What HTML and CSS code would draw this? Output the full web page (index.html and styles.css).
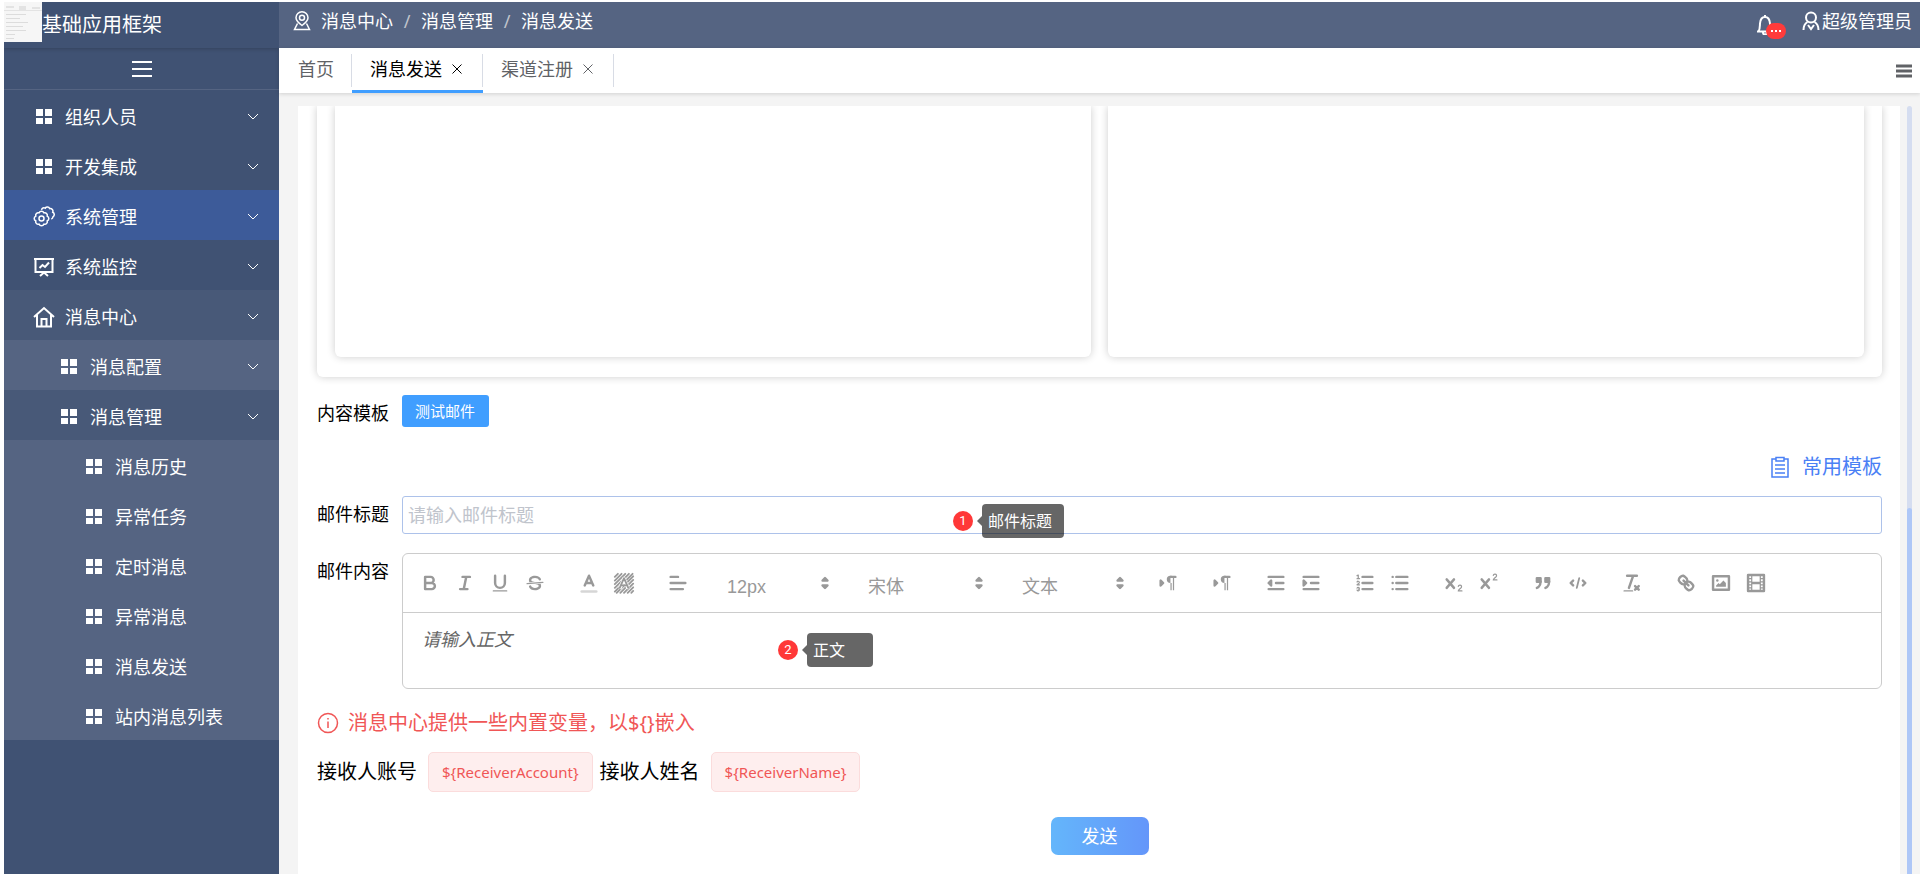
FILE: index.html
```html
<!DOCTYPE html>
<html lang="zh-CN">
<head>
<meta charset="utf-8">
<title>消息发送</title>
<link rel="stylesheet" href="styles.css">
</head>
<body>
<svg class="sprite" aria-hidden="true">
  <symbol id="grid" viewBox="0 0 16 16"><path fill="currentColor" d="M0 0h7v7H0zM9 0h7v7H9zM0 9h7v6H0zM9 9h7v6H9z"/></symbol>
  <symbol id="chevron" viewBox="0 0 12 8"><path d="M1 1l5 5 5-5"/></symbol>
  <symbol id="close" viewBox="0 0 10 10"><path d="M.5 .5l9 9M9.500 .5l-9 9"/></symbol>
  <symbol id="arrows" viewBox="0 0 18 18"><path fill="currentColor" d="M7 11l2 2 2-2zM7 7l2-2 2 2z"/></symbol>
  <symbol id="ltr" viewBox="0 0 18 18"><path fill="currentColor" d="M3 11l2-2-2-2z"/><path d="M15 4h-4"/><path fill="currentColor" stroke="none" d="M11 3a3 3 0 0 0 0 6h1V3zM11 4h1v11h-1zM13 4h1v11h-1z"/></symbol>
</svg>
<div class="app">
  <aside class="sidebar">
    <div class="brand">
      <svg class="brand-logo" viewBox="0 0 38 40" aria-hidden="true"><path fill="#f6f6f6" stroke="none" d="M0 0h38v40H0z"/><path fill="#e3e3e3" stroke="none" d="M2 4h8v2H2zM15 4h7v4h-7zM28 5h8v2h-8zM0 8h38v1H0z"/><path stroke="#dcdcdc" d="M2 12.500h20M2 16.500h14M2 20.500h22M2 24.500h17M2 28.500h20M2 32.500h9M2 36.500h8"/></svg>
      <span>基础应用框架</span>
    </div>
    <button class="collapse" aria-label="折叠菜单"><svg viewBox="0 0 20 18" width="20" height="18"><path d="M0 2h20M0 9h20M0 16h20"/></svg></button>
    <nav class="menu">
      <button class="item"><svg class="ico small"><use href="#grid"/></svg><span>组织人员</span><svg class="arrow"><use href="#chevron"/></svg></button>
      <button class="item"><svg class="ico small"><use href="#grid"/></svg><span>开发集成</span><svg class="arrow"><use href="#chevron"/></svg></button>
      <button class="item active"><svg class="ico" viewBox="0 0 22 22"><path d="M14.200 14.900A2.600 2.600 0 0 1 10.900 18.200 2.600 2.600 0 0 1 6.100 18.200 2.600 2.600 0 0 1 2.800 14.900 2.600 2.600 0 0 1 2.800 10.100 2.600 2.600 0 0 1 6.100 6.800 2.600 2.600 0 0 1 10.900 6.800 2.600 2.600 0 0 1 14.200 10.100 2.600 2.600 0 0 1 14.200 14.900z"/><circle cx="8.500" cy="12.500" r="2.500"/><path d="M8.500 3.800A2.500 2.500 0 0 1 12.200 2.200 2.600 2.600 0 0 1 16.700 2.600 2.600 2.600 0 0 1 19.700 6.200 2.600 2.600 0 0 1 20 10.800 2.500 2.500 0 0 1 18.300 13"/></svg><span>系统管理</span><svg class="arrow"><use href="#chevron"/></svg></button>
      <button class="item"><svg class="ico" viewBox="0 0 22 22"><path d="M1 3h20M2.500 3v13h17V3M6.500 12l3-3 2.500 2 4-4.500M7 20l4-3.500 4 3.500"/></svg><span>系统监控</span><svg class="arrow"><use href="#chevron"/></svg></button>
      <button class="item open"><svg class="ico" viewBox="0 0 22 22"><path d="M1 11L11 2l10 9M4 9v11.500h14V9M8.500 20v-7h5v7"/></svg><span>消息中心</span><svg class="arrow"><use href="#chevron"/></svg></button>
      <button class="item level2"><svg class="ico small"><use href="#grid"/></svg><span>消息配置</span><svg class="arrow"><use href="#chevron"/></svg></button>
      <button class="item level2 open"><svg class="ico small"><use href="#grid"/></svg><span>消息管理</span><svg class="arrow"><use href="#chevron"/></svg></button>
      <a class="item level3" href="#"><svg class="ico small"><use href="#grid"/></svg><span>消息历史</span></a>
      <a class="item level3" href="#"><svg class="ico small"><use href="#grid"/></svg><span>异常任务</span></a>
      <a class="item level3" href="#"><svg class="ico small"><use href="#grid"/></svg><span>定时消息</span></a>
      <a class="item level3" href="#"><svg class="ico small"><use href="#grid"/></svg><span>异常消息</span></a>
      <a class="item level3" href="#"><svg class="ico small"><use href="#grid"/></svg><span>消息发送</span></a>
      <a class="item level3" href="#"><svg class="ico small"><use href="#grid"/></svg><span>站内消息列表</span></a>
    </nav>
  </aside>

  <div class="main">
    <header class="topbar">
      <nav class="crumbs" aria-label="面包屑">
        <svg class="pin" viewBox="0 0 18 20"><path d="M9 14.500C5.500 12 3 9.500 3 6.800a6 6 0 0 1 12 0c0 2.700-2.500 5.200-6 7.700z"/><circle cx="9" cy="6.800" r="2.500"/><path d="M4.500 12.500L1.500 18.500h15l-3-6"/></svg>
        <a href="#">消息中心</a><i>/</i><a href="#">消息管理</a><i>/</i><a href="#">消息发送</a>
      </nav>
      <div class="account">
        <button class="bell" aria-label="通知"><svg viewBox="0 0 18 21" width="18" height="21"><path d="M1 17.500h16M2.500 17.500c1.500-2 1.300-5 1.500-8 .3-4 2-6.500 5-6.500s4.700 2.500 5 6.500c.2 3 0 6 1.500 8M9 1v2M7 18.500a2 2 0 0 0 4 0"/></svg><span class="badge"><b></b><b></b><b></b></span></button>
        <button class="user"><svg viewBox="0 0 18 20" width="18" height="20"><circle cx="9" cy="6.500" r="5"/><path d="M1.500 19c0-3.500 1.500-6.500 4-8M16.500 19c0-3.500-1.500-6.500-4-8M6 14l3 4 3-4"/></svg><span>超级管理员</span></button>
      </div>
    </header>

    <div class="tabs">
      <button class="tab home">首页</button>
      <div class="tab current"><span>消息发送</span><button class="x" aria-label="关闭消息发送"><svg width="10" height="10"><use href="#close"/></svg></button></div>
      <div class="tab"><span>渠道注册</span><button class="x" aria-label="关闭渠道注册"><svg width="10" height="10"><use href="#close"/></svg></button></div>
      <button class="tabs-menu" aria-label="标签菜单"><svg viewBox="0 0 16 14" width="16" height="14"><path d="M0 2h16M0 7h16M0 12h16"/></svg></button>
    </div>

    <div class="content">
      <main class="card">
        <section class="receivers"><div class="pane"></div><div class="pane"></div></section>
        <form class="form">
          <div class="row template">
            <span class="label">内容模板</span>
            <button type="button" class="primary">测试邮件</button>
          </div>
          <a class="common" href="#"><svg viewBox="0 0 20 22" width="20" height="22"><path d="M6 3H2v18h16V3h-4M6 1.500h8V5H6zM5 9h10M5 13h10M5 17h10"/></svg><span>常用模板</span></a>
          <div class="row title">
            <label class="label" for="title">邮件标题</label>
            <div class="field">
              <input id="title" type="text" placeholder="请输入邮件标题">
              <div class="hint hint-title"><span class="num">1</span><span class="tip">邮件标题</span></div>
            </div>
          </div>
          <div class="row body">
            <label class="label" for="body">邮件内容</label>
            <div class="field editor">
              <div class="toolbar">
                <div class="group">
                  <button type="button" aria-label="粗体"><svg viewBox="0 0 18 18"><path d="M5 4h4.500a2.500 2.500 0 0 1 0 5H5zM5 9h5.500a2.500 2.500 0 0 1 0 5H5z"/></svg></button>
                  <button type="button" aria-label="斜体"><svg viewBox="0 0 18 18"><path d="M7 4h6M5 14h6M8 14l2-10"/></svg></button>
                  <button type="button" aria-label="下划线"><svg viewBox="0 0 18 18"><path d="M5 3v6a4 4 0 0 0 8 0V3"/><rect class="f" x="3" y="15" width="12" height="1" rx=".5"/></svg></button>
                  <button type="button" aria-label="删除线"><svg viewBox="0 0 18 18"><path class="t" d="M15.500 8.500l-13 1"/><path class="f" d="M9 8C6.500 7.800 6 7.500 6 6.500 6 5.800 7.300 5 9 5c1.600 0 2.800.7 3 1.300a1 1 0 0 0 1.900-.6C13.400 4.100 11.400 3 9 3 6.200 3 4 4.500 4 6.500a3.200 3.200 0 0 0 .5 1.800zM9 10c2.500.2 3 .5 3 1.500 0 .7-1.300 1.500-3 1.500-1.600 0-2.800-.7-3-1.300a1 1 0 1 0-1.900.6C4.600 13.900 6.600 15 9 15c2.800 0 5-1.500 5-3.500a3.200 3.200 0 0 0-.5-1.800z"/></svg></button>
                </div>
                <div class="group">
                  <button type="button" aria-label="文字颜色"><svg viewBox="0 0 18 18"><path opacity=".4" d="M3 16h12"/><path d="M5.500 11L9 3l3.500 8M11.600 9H6.400"/></svg></button>
                  <button type="button" aria-label="背景颜色"><svg viewBox="0 0 18 18"><path class="h" d="M1.500 4l2.500-2.500M1.500 7L7 1.500M1.500 10L10 1.500M1.500 13L13 1.500M1.500 16L16 1.500M3 17L16.500 3.500M6 17L16.500 6.500M9 17l7.500-7.500M12 17l4.500-4.500M15 17l1.500-1.500"/><path stroke="#fff" stroke-width="3" d="M6 12.500l3-7 3 7"/><path stroke-width="1.500" d="M5.500 13L9 5l3.500 8M11.600 11H6.400"/></svg></button>
                </div>
                <div class="group"><button type="button" aria-label="对齐"><svg viewBox="0 0 18 18"><path d="M3 4h6M3 9h12M3 14h10"/></svg></button></div>
                <div class="picker"><select aria-label="字号"><option>12px</option></select><svg><use href="#arrows"/></svg></div>
                <div class="picker wide"><select aria-label="字体"><option>宋体</option></select><svg><use href="#arrows"/></svg></div>
                <div class="picker"><select aria-label="段落"><option>文本</option></select><svg><use href="#arrows"/></svg></div>
                <div class="group"><button type="button" aria-label="从左到右"><svg><use href="#ltr"/></svg></button></div>
                <div class="group"><button type="button" aria-label="文字方向"><svg><use href="#ltr"/></svg></button></div>
                <div class="group">
                  <button type="button" aria-label="减少缩进"><svg viewBox="0 0 18 18"><path d="M3 4h12M3 14h12M9 9h6"/><path class="fs" d="M5 7v4L3 9z"/></svg></button>
                  <button type="button" aria-label="增加缩进"><svg viewBox="0 0 18 18"><path d="M3 4h12M3 14h12M9 9h6"/><path class="fs" d="M3 7v4l2-2z"/></svg></button>
                </div>
                <div class="group">
                  <button type="button" aria-label="有序列表"><svg viewBox="0 0 18 18"><path d="M7 4h8M7 9h8M7 14h8"/><path class="t" d="M2.500 3l1-.5v3M2.500 5.500h2M4.500 10.500h-2c0-.3 1.900-1.100 1.900-2.200a1 1 0 0 0-1.900-.1M2.500 14.800a1 1 0 0 0 1.900-.1c0-.4-.3-.7-.7-.7.4 0 .7-.3.700-.7a1 1 0 0 0-1.900-.1"/></svg></button>
                  <button type="button" aria-label="无序列表"><svg viewBox="0 0 18 18"><path d="M6 4h9M6 9h9M6 14h9M3 4h0M3 9h0M3 14h0"/></svg></button>
                </div>
                <div class="group">
                  <button type="button" aria-label="下标"><svg viewBox="0 0 18 18"><path d="M3 6l6 7M9 6l-6 7"/><path class="t" d="M12.500 11.800c.3-1.400 2.700-1.300 2.700.2 0 1.400-2.700 2-2.700 3.500h3"/></svg></button>
                  <button type="button" aria-label="上标"><svg viewBox="0 0 18 18"><path d="M3 6l6 7M9 6l-6 7"/><path class="t" d="M12.500 2.800c.3-1.400 2.700-1.300 2.700.2 0 1.400-2.700 2-2.700 3.500h3"/></svg></button>
                </div>
                <div class="group">
                  <button type="button" aria-label="引用"><svg viewBox="0 0 18 18"><path class="fs" d="M4 5h3v3H4zM11 5h3v3h-3z"/><path d="M7 8c0 4-3 5-3 5M14 8c0 4-3 5-3 5"/></svg></button>
                  <button type="button" aria-label="代码"><svg viewBox="0 0 18 18"><path d="M5 7L3 9l2 2M13 7l2 2-2 2"/><path stroke-width="1.500" d="M10 5L8 13"/></svg></button>
                </div>
                <div class="group"><button type="button" aria-label="清除格式"><svg viewBox="0 0 18 18"><path d="M5 3h8M6.500 13L10 3M11.500 11.500l3 3M14.500 11.500l-3 3"/><rect class="f" x="2" y="15" width="8" height="1" rx=".5"/></svg></button></div>
                <div class="group">
                  <button type="button" aria-label="链接"><svg viewBox="0 0 18 18"><path d="M7 7l4 4M8.900 4.600a3.500 3.500 0 0 1 .4 4.700 3.500 3.500 0 0 1-4.700-.4C3.200 7.500 2 6.400 4.200 4.200s3.300-1 4.700.4zM13.400 9.100a3.500 3.500 0 0 0-4.700-.4 3.500 3.500 0 0 0 .4 4.700c1.400 1.400 2.500 2.500 4.700.4s1-3.300-.4-4.700z"/></svg></button>
                  <button type="button" aria-label="图片"><svg viewBox="0 0 18 18"><path d="M2.500 3.500h13v11h-13z"/><circle class="f" cx="6" cy="7" r="1"/><path class="f" d="M5 12v-1l2-2 1 1 3-3 2 2v3z"/></svg></button>
                  <button type="button" aria-label="视频"><svg viewBox="0 0 18 18"><path d="M2.500 2.500h13v13h-13z"/><path class="f" d="M5 3h1v12H5zM12 3h1v12h-1zM6 8h6v2H6zM3 5h3v1H3zM3 7.500h3v1H3zM3 10h3v1H3zM3 12.500h3v1H3zM12 5h3v1h-3zM12 7.500h3v1h-3zM12 10h3v1h-3zM12 12.500h3v1h-3z"/></svg></button>
                </div>
              </div>
              <textarea id="body" placeholder="请输入正文"></textarea>
              <div class="hint hint-body"><span class="num">2</span><span class="tip">正文</span></div>
            </div>
          </div>
          <p class="notice"><svg viewBox="0 0 22 22" width="22" height="22"><circle cx="11" cy="11" r="9.500"/><path d="M11 6v1.500M11 9.500V16"/></svg><span>消息中心提供一些内置变量，以${}嵌入</span></p>
          <div class="vars"><span>接收人账号</span><code>${ReceiverAccount}</code><span>接收人姓名</span><code>${ReceiverName}</code></div>
          <button type="submit" class="send">发送</button>
        </form>
      </main>
      <div class="scroll"><div class="thumb"></div></div>
    </div>
  </div>
</div>
</body>
</html>
```
FILE: styles.css
```css
* { box-sizing: border-box; }
body {
  margin: 0;
  background: #fff;
  color: #000;
  font: 400 18px/24px "Noto Sans", "Noto Sans CJK SC", sans-serif;
}
button, input, select, textarea { font: inherit; color: inherit; margin: 0; }
button { padding: 0; border: 0; background: none; cursor: pointer; }
a { color: inherit; text-decoration: none; }
svg { fill: none; stroke: currentColor; flex: none; }
.sprite { position: absolute; width: 0; height: 0; }

.app { display: flex; height: 100vh; padding: 2px 0 7px 4px; }

/* Sidebar */
.sidebar { width: 275px; flex: none; background: #405273; color: #fff; overflow: hidden; }
.brand { display: flex; align-items: flex-start; height: 46px; font-size: 20px; line-height: 45px; box-shadow: 0 1px 4px rgba(0, 0, 0, .2); }
.brand-logo { width: 38px; height: 40px; }
.collapse { display: flex; align-items: center; justify-content: center; width: 100%; height: 42px; border-bottom: 1px solid #556482; }
.collapse svg { stroke-width: 2; }
.item { display: flex; align-items: center; width: 100%; height: 50px; padding: 4px 20px 0 29px; text-align: left; }
.item span { flex: 1; }
.ico { width: 22px; height: 22px; margin-right: 10px; stroke-width: 2; }
.active .ico { stroke-width: 1.500; }
.ico.small { width: 16px; height: 16px; margin: 0 13px 0 3px; stroke: none; }
.arrow { width: 12px; height: 8px; stroke-width: 1; }
.item.active { background: #3d5b99; }
.level2, .level3 { background: #556482; }
.item.open { background: #485978; }
.level2 { padding-left: 54px; }
.level3 { padding-left: 79px; }

/* Header */
.main { flex: 1; min-width: 0; display: flex; flex-direction: column; }
.topbar { display: flex; justify-content: space-between; height: 46px; flex: none; padding: 0 8px 0 14px; background: #556482; color: #fff; }
.crumbs { display: flex; align-items: center; height: 38px; }
.pin { width: 18px; height: 20px; margin-right: 10px; stroke-width: 1.500; }
.crumbs i { width: 28px; text-align: center; font-style: normal; color: #c0c4cc; }
.account { display: flex; align-items: flex-start; gap: 16px; height: 46px; }
.bell { position: relative; width: 30px; height: 21px; margin-top: 12px; text-align: left; }
.bell svg, .user svg { display: block; stroke-width: 2; }
.badge { position: absolute; left: 10px; top: 9px; display: flex; align-items: center; justify-content: center; gap: 2px; width: 20px; height: 16px; border-radius: 8px; background: #ff3b3b; }
.badge b { width: 2px; height: 2px; background: #fff; }
.user { display: flex; align-items: center; gap: 2px; height: 38px; }

.tabs { display: flex; height: 45px; flex: none; position: relative; background: #fff; color: #606266; box-shadow: 0 1px 4px rgba(0, 0, 0, .15); }
.tab { position: relative; display: flex; align-items: center; gap: 10px; height: 41px; padding: 0 21px 0 18px; }
.tab.home { padding: 0 18px 0 19px; }
.tab::after { content: ""; position: absolute; right: 0; top: 6px; width: 1px; height: 33px; background: #d8dce5; }
.tab.current { height: 45px; color: #000; border-bottom: 3px solid #409eff; padding-bottom: 1px; }
.x { width: 10px; height: 24px; display: flex; align-items: center; }
.tabs-menu { margin: 0 8px 0 auto; color: #606266; }
.tabs-menu svg { stroke-width: 3; display: block; }

/* Content */
.content { flex: 1; min-height: 0; display: flex; padding: 13px 8px 0 19px; background: #f4f4f4; }
.card { flex: 1; min-width: 0; padding: 0 18px 0 19px; background: #fff; overflow: hidden; }
.scroll { width: 5px; margin-left: 7px; display: flex; flex-direction: column; justify-content: flex-end; border-radius: 3px 3px 0 0; background: #d5ddf0; }
.thumb { height: 47.600%; border-radius: 3px 3px 0 0; background: #aec7f7; }
.receivers { display: flex; gap: 17px; height: 271px; padding: 0 18px 20px; border-radius: 0 0 6px 6px; box-shadow: 0 0 8px rgba(0, 0, 0, .2); }
.pane { flex: 1; border-radius: 0 0 6px 6px; box-shadow: 0 0 8px rgba(0, 0, 0, .2); }

.form { display: flex; flex-direction: column; }
.row { display: flex; align-items: flex-start; }
.label { width: 85px; flex: none; line-height: 36px; }
.field { position: relative; flex: 1; min-width: 0; }
.template { margin-top: 18px; }
.primary { height: 32px; padding: 0 14px 0 13px; border-radius: 3px; background: #409eff; color: #fff; font-size: 15px; }
.common { display: flex; align-items: center; gap: 12px; align-self: flex-end; margin-top: 20px; height: 32px; color: #4a80f5; font-size: 20px; }
.common svg { stroke-width: 1.500; }
.title { margin-top: 13px; }
.title input { display: block; width: 100%; height: 38px; padding: 0 5px; border: 1px solid #adc2ea; border-radius: 3px; background: transparent; outline: 0; }
.title input::placeholder { color: #c0c4cc; opacity: 1; }
.body { margin-top: 19px; }
.editor { height: 136px; border: 1px solid #ccc; border-radius: 6px; }
.toolbar { display: flex; align-items: center; gap: 19px; height: 59px; padding: 0 9px; border-bottom: 1px solid #ccc; color: #999; }
.group { display: flex; }
.group button { display: flex; justify-content: center; width: 35px; }
.group svg, .picker svg { width: 22px; height: 22px; stroke-width: 2; stroke-linecap: round; stroke-linejoin: round; }
.group .f { fill: currentColor; stroke: none; }
.group .fs { fill: currentColor; }
.group .t { stroke-width: 1; }
.group .h { stroke-width: 1.500; }
.picker { display: flex; align-items: center; width: 122px; }
.picker.wide { width: 135px; }
.picker select { flex: 1; min-width: 0; height: 36px; padding: 8px 0 0 13px; border: 0; background: none; appearance: none; outline: 0; font-family: "Liberation Sans", "Noto Sans CJK SC", sans-serif; }
.editor textarea { display: block; width: 100%; height: 74px; padding: 14px 19px; border: 0; background: none; resize: none; outline: 0; }
.editor textarea::placeholder { color: #666; opacity: 1; font-style: italic; }

.hint { position: absolute; display: flex; align-items: center; gap: 9px; color: #fff; }
.num { width: 20px; height: 20px; border-radius: 50%; background: #ff3838; font: 13px/20px Roboto, sans-serif; text-align: center; }
.tip { position: relative; min-width: 66px; height: 34px; padding: 0 12px 0 6px; border-radius: 4px; background: rgba(0, 0, 0, .6); font-size: 16px; line-height: 34px; }
.tip::before { content: ""; position: absolute; right: 100%; top: 12px; border: 5px solid transparent; border-left: 0; border-right-color: rgba(0, 0, 0, .6); }
.hint-title { left: 551px; top: 8px; }
.hint-body { left: 375px; top: 79px; }

.notice { display: flex; align-items: center; gap: 9px; height: 30px; margin: 19px 0 0; color: #f05656; font-size: 20px; }
.notice svg { stroke-width: 1.500; }
.vars { display: flex; align-items: center; margin-top: 14px; font-size: 20px; }
.vars code { height: 40px; margin: 0 7px 0 11px; padding: 0 13px; border: 1px solid #fbdcdc; border-radius: 5px; background: #feeeee; color: #f05656; font: 15px/38px "Noto Sans", sans-serif; }
.send { align-self: center; width: 98px; height: 38px; margin-top: 25px; border-radius: 7px; background: linear-gradient(90deg, #64b6fb, #6496fa); color: #fff; }
```
